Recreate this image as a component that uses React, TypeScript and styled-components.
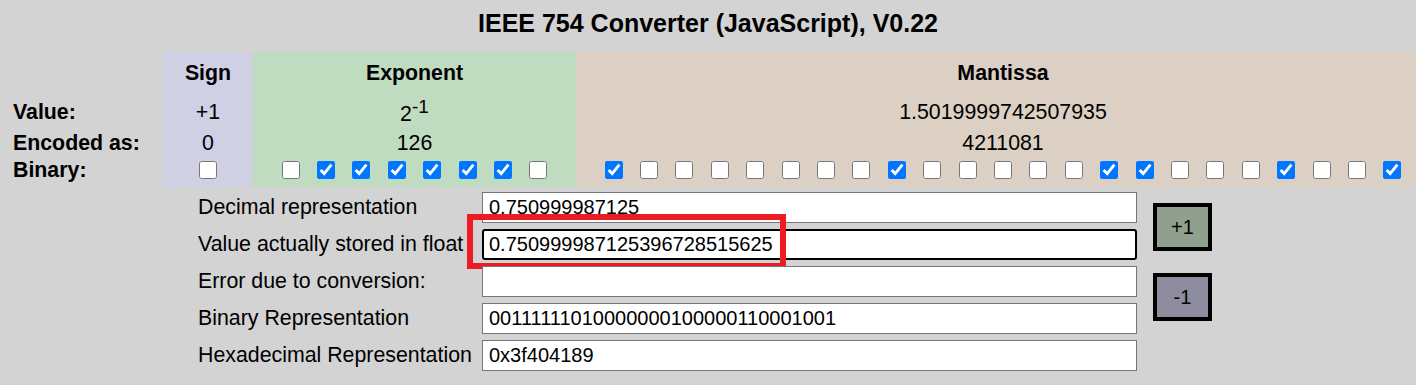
import styled, { createGlobalStyle } from 'styled-components';

const GlobalStyle = createGlobalStyle`
  html, body {
    margin: 0;
    padding: 0;
    background: #d3d3d3;
    overflow: hidden;
  }
  body {
    font-family: 'Liberation Sans', Arial, sans-serif;
    color: #000;
  }
`;

const signBits = '0';
const exponentBits = '01111110';
const mantissaBits = '10000000100000110001001';

type Field = {
  name: string;
  bg: string;
  width: number;
  value: string;
  power?: string;
  encoded: string;
  bits: string;
};

const fields: Field[] = [
  { name: 'Sign', bg: '#d0d0e4', width: 90, value: '+1', encoded: '0', bits: signBits },
  {
    name: 'Exponent',
    bg: '#c0dcc0',
    width: 323,
    value: '2',
    power: '-1',
    encoded: '126',
    bits: exponentBits
  },
  {
    name: 'Mantissa',
    bg: '#dcd0c4',
    width: 854,
    value: '1.5019999742507935',
    encoded: '4211081',
    bits: mantissaBits
  }
];

const rows = [
  { label: 'Decimal representation', value: '0.750999987125' },
  { label: 'Value actually stored in float', value: '0.750999987125396728515625', active: true },
  { label: 'Error due to conversion:', value: '' },
  { label: 'Binary Representation', value: signBits + exponentBits + mantissaBits },
  { label: 'Hexadecimal Representation', value: '0x3f404189' }
];

const App = () => {
  return (
    <Page>
      <GlobalStyle />
      <Title>IEEE 754 Converter (JavaScript), V0.22</Title>

      <BitTable>
        <Column $bg="transparent" $width={163}>
          <HeadCell />
          <LabelCell>Value:</LabelCell>
          <LabelCell>Encoded as:</LabelCell>
          <LabelCell $bits>Binary:</LabelCell>
        </Column>
        {fields.map((f) => (
          <Column key={f.name} $bg={f.bg} $width={f.width}>
            <HeadCell>{f.name}</HeadCell>
            <ValueCell>
              <span>
                {f.value}
                {f.power && <Sup>{f.power}</Sup>}
              </span>
            </ValueCell>
            <ValueCell>
              <span>{f.encoded}</span>
            </ValueCell>
            <BitRow>
              {f.bits.split('').map((b, i) => (
                <BitBox key={i} type="checkbox" defaultChecked={b === '1'} />
              ))}
            </BitRow>
          </Column>
        ))}
      </BitTable>

      <Form>
        {rows.map((r, i) => (
          <FormRow key={i}>
            <FieldLabel>{r.label}</FieldLabel>
            <InputCell>
              <TextField type="text" defaultValue={r.value} $active={r.active} />
              {r.active && <Highlight />}
            </InputCell>
          </FormRow>
        ))}
        <StepButton $bg="#8fa08f" $row={1} $offset={11}>
          +1
        </StepButton>
        <StepButton $bg="#8e8c9f" $row={3} $offset={7}>
          -1
        </StepButton>
      </Form>
    </Page>
  );
};

export default App;

const Page = styled.div`
  width: 1416px;
  height: 385px;
  overflow: hidden;
`;

const Title = styled.h3`
  margin: 0;
  padding-top: 9px;
  height: 28px;
  line-height: 28px;
  font-size: 25px;
  font-weight: bold;
  text-align: center;
`;

const BitTable = styled.div`
  display: flex;
  margin-top: 15px;
  width: 1430px;
`;

const Column = styled.div<{ $bg: string; $width: number }>`
  flex: 0 0 ${(p) => p.$width}px;
  display: grid;
  grid-template-rows: 42px 36px 26px 31px;
  background: ${(p) => p.$bg};
`;

const HeadCell = styled.div`
  display: flex;
  align-items: center;
  justify-content: center;
  font-size: 21.33px;
  font-weight: bold;
`;

const LabelCell = styled.div<{ $bits?: boolean }>`
  display: flex;
  align-items: center;
  padding-left: 13px;
  padding-bottom: ${(p) => (p.$bits ? 3 : 0)}px;
  font-size: 21.33px;
  font-weight: bold;
`;

const ValueCell = styled.div`
  display: flex;
  align-items: center;
  justify-content: center;
  font-size: 21.33px;
  line-height: 1.15;
`;

const Sup = styled.sup`
  font-size: 19px;
  line-height: 1;
  vertical-align: 8px;
`;

const BitRow = styled.div`
  display: flex;
  align-items: center;
  justify-content: center;
  gap: 17.4px;
  padding-bottom: 3px;
`;

const BitBox = styled.input`
  width: 18px;
  height: 18px;
  margin: 0;
`;

const Form = styled.div`
  display: grid;
  grid-template-columns: 284px 655px 75px;
  grid-auto-rows: 31px;
  row-gap: 6px;
  margin: 5px 0 0 198px;
`;

const FormRow = styled.div`
  display: contents;
`;

const FieldLabel = styled.div`
  grid-column: 1;
  display: flex;
  align-items: center;
  font-size: 21.33px;
  white-space: nowrap;
`;

const InputCell = styled.div`
  grid-column: 2;
  position: relative;
`;

const TextField = styled.input<{ $active?: boolean }>`
  box-sizing: border-box;
  width: 100%;
  height: 100%;
  margin: 0;
  padding: 0 ${(p) => (p.$active ? 5 : 6)}px;
  font-family: 'Liberation Sans', Arial, sans-serif;
  font-size: 20px;
  color: #000;
  background: #fff;
  border: ${(p) => (p.$active ? '2px solid #000' : '1px solid #767676')};
  border-radius: ${(p) => (p.$active ? 3 : 0)}px;
  outline: none;
`;

const Highlight = styled.div`
  position: absolute;
  left: -15px;
  top: -15px;
  width: 319px;
  height: 55px;
  box-sizing: border-box;
  border: 6px solid #ed1c24;
  pointer-events: none;
`;

const StepButton = styled.button<{ $bg: string; $row: number; $offset: number }>`
  grid-column: 3;
  grid-row: ${(p) => p.$row} / span 2;
  justify-self: end;
  align-self: start;
  margin-top: ${(p) => p.$offset}px;
  box-sizing: border-box;
  width: 59px;
  height: 48px;
  padding: 0;
  border: 4px solid #000;
  background: ${(p) => p.$bg};
  font-family: 'Liberation Sans', Arial, sans-serif;
  font-size: 20px;
  color: #000;
`;
